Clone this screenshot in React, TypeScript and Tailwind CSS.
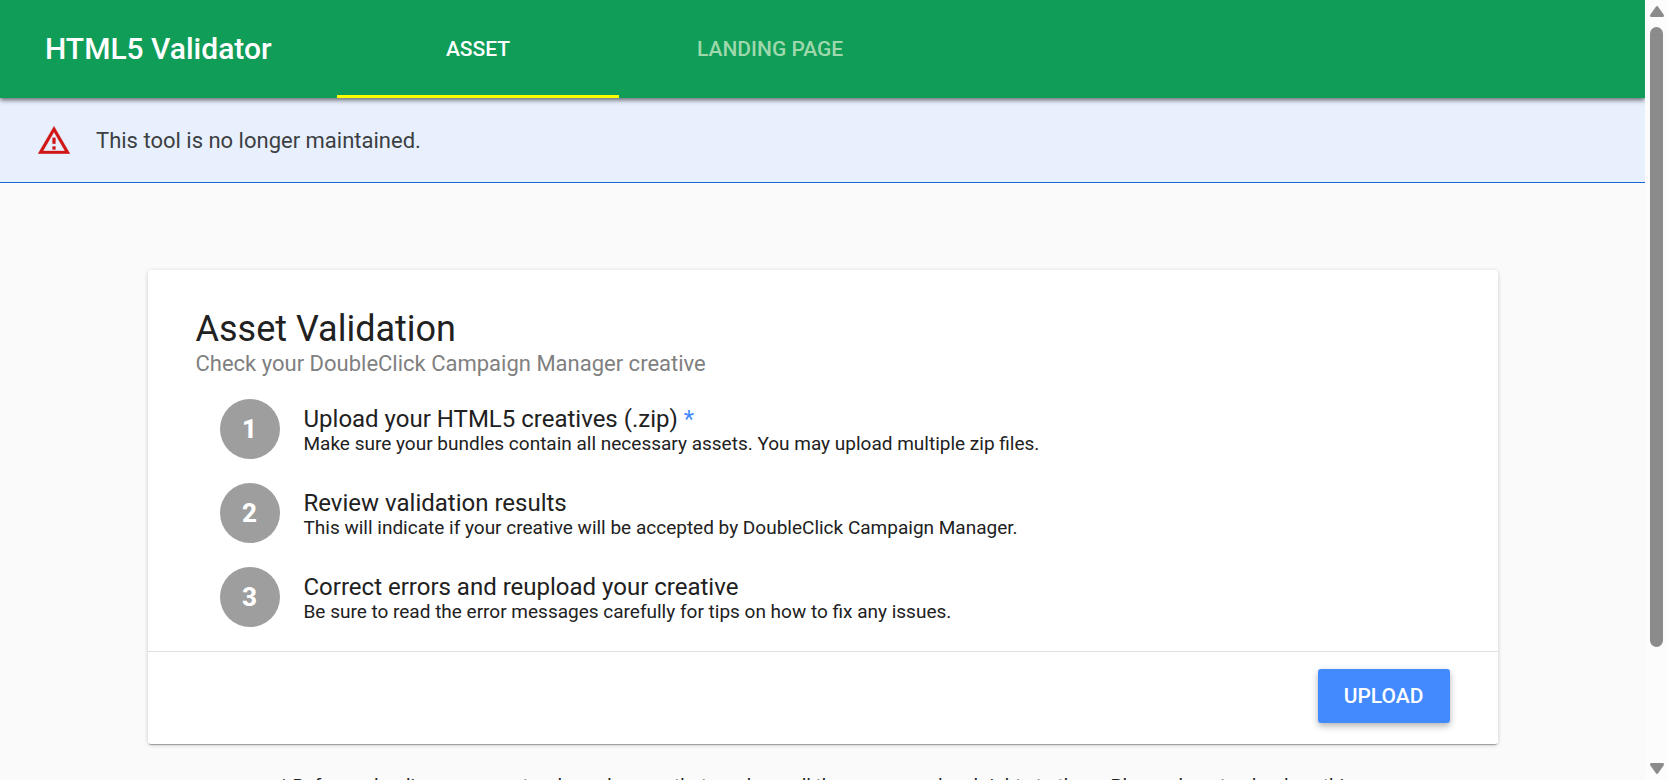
const steps = [
  {
    title: "Upload your HTML5 creatives (.zip)",
    required: true,
    detail: "Make sure your bundles contain all necessary assets. You may upload multiple zip files.",
  },
  {
    title: "Review validation results",
    required: false,
    detail: "This will indicate if your creative will be accepted by DoubleClick Campaign Manager.",
  },
  {
    title: "Correct errors and reupload your creative",
    required: false,
    detail: "Be sure to read the error messages carefully for tips on how to fix any issues.",
  },
];

function WarningIcon() {
  return (
    <svg viewBox="1 2 22 19" className="h-7 w-8 shrink-0 fill-[#d01716] stroke-[#d01716] stroke-[0.2]" aria-hidden="true">
      <path d="M12 5.99L19.53 19H4.47L12 5.99M12 2L1 21h22L12 2zm1 14h-2v2h2v-2zm0-6h-2v4h2v-4z" />
    </svg>
  );
}

function Header() {
  return (
    <header className="relative z-10 flex h-[98px] bg-[#0f9d58] text-white shadow-[0_2px_5px_rgba(0,0,0,0.6)]">
      <h1 className="flex w-[337px] shrink-0 items-center pb-0.5 pl-[45px] text-[30px] font-medium">HTML5 Validator</h1>
      <nav className="flex text-[21px] font-medium uppercase">
        <a href="#asset" className="flex w-[282px] items-center justify-center border-b-3 border-[#ffff00] pt-1">
          Asset
        </a>
        <a href="#landing" className="flex items-center px-[78px] pt-px text-[#9fd8ac]">
          Landing page
        </a>
      </nav>
    </header>
  );
}

function Scrollbar() {
  return (
    <div className="flex w-[23px] shrink-0 flex-col items-center bg-[#fcfcfc] py-[6px]" aria-hidden="true">
      <svg viewBox="0 0 14 11" className="h-[11px] w-[14px] fill-[#8b8b8b]">
        <path d="M5.7 1 Q7-.8 8.3 1 L13.6 8.6 Q14.6 11 12.6 11 H1.4 Q-.6 11 .4 8.6Z" />
      </svg>
      <div className="mt-[10px] h-[620px] w-[13px] rounded-full bg-[#8b8b8b]" />
      <svg viewBox="0 0 14 11" className="mt-auto h-[11px] w-[14px] rotate-180 fill-[#8b8b8b]">
        <path d="M5.7 1 Q7-.8 8.3 1 L13.6 8.6 Q14.6 11 12.6 11 H1.4 Q-.6 11 .4 8.6Z" />
      </svg>
    </div>
  );
}

export default function App() {
  return (
    <div className="flex h-screen overflow-hidden bg-[#fafafa] font-[Roboto,sans-serif] text-[#212121]">
      <div className="min-w-0 flex-1 overflow-hidden">
        <Header />
        <div role="alert" className="flex h-[85px] items-center gap-[26px] border-b border-[#1967d2] bg-[#e8f0fe] pl-[38px] text-[22px] text-[#3c4043]">
          <WarningIcon />
          <p>This tool is no longer maintained.</p>
        </div>
        <main className="mx-auto max-w-[1350px] pt-[87px]">
          <section className="rounded-[3px] bg-white shadow-[0_1px_4px_rgba(0,0,0,0.2),0_2px_1px_-1px_rgba(0,0,0,0.3)]">
            <div className="px-12 pt-[37px] pb-6">
              <h2 className="text-[36px] leading-[45px]">Asset Validation</h2>
              <p className="text-[22px] leading-6 text-[#808080]">Check your DoubleClick Campaign Manager creative</p>
              <ol className="mt-[23px] flex flex-col gap-6 pl-6">
                {steps.map((step, i) => (
                  <li key={step.title} className="flex h-[60px] items-center gap-6">
                    <span className="flex size-[60px] shrink-0 items-center justify-center rounded-full bg-[#9e9e9e] text-[26px] font-extrabold text-white">
                      {i + 1}
                    </span>
                    <div className="pt-[3px]">
                      <h3 className="text-[24px] leading-[26px]">
                        {step.title}
                        {step.required && <span className="text-[#448aff]"> *</span>}
                      </h3>
                      <p className="text-[19px] leading-6">{step.detail}</p>
                    </div>
                  </li>
                ))}
              </ol>
            </div>
            <div className="flex justify-end border-t border-[#e0e0e0] px-12 pt-[17px] pb-[21px]">
              <button type="button" className="h-[54px] w-[132px] rounded-[3px] bg-[#448aff] pt-0.5 text-[21px] font-medium text-white uppercase shadow-[0_3px_7px_rgba(0,0,0,0.3)]">
                Upload
              </button>
            </div>
          </section>
          <p className="mt-[30px] px-[120px] text-center text-[19px] leading-6">
            * Before uploading your assets, please be sure that you have all the necessary legal rights to them. Please do not upload anything
          </p>
        </main>
      </div>
      <Scrollbar />
    </div>
  );
}
